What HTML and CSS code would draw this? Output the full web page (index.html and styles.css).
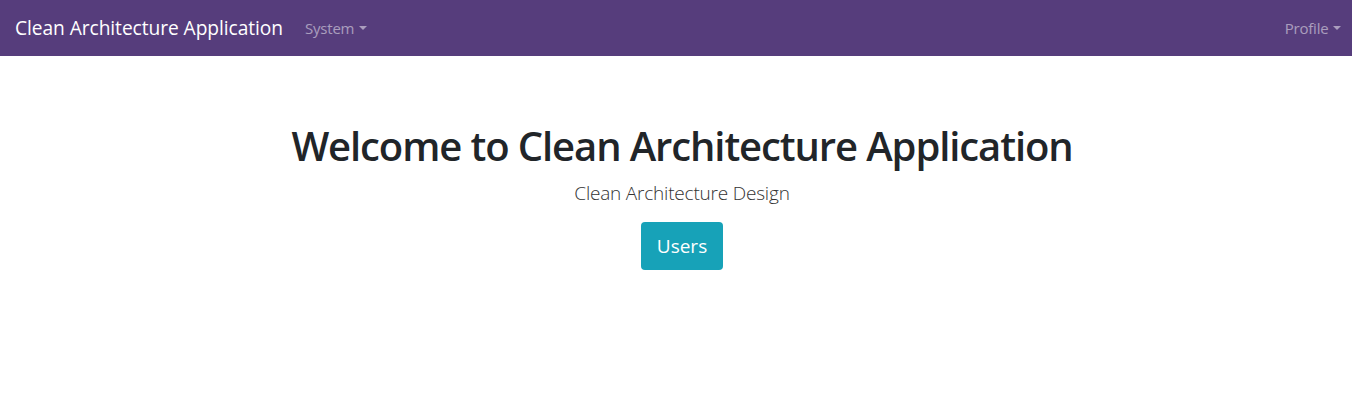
FILE: index.html
```html
<!DOCTYPE html>
<html lang="en">
<head>
<meta charset="utf-8">
<title>Clean Architecture Application</title>
<link rel="stylesheet" href="styles.css">
</head>
<body>
<nav class="navbar">
  <div class="nav-left">
    <a class="brand" href="#">Clean Architecture Application</a>
    <a class="nav-link dropdown-toggle" href="#">System</a>
  </div>
  <a class="nav-link dropdown-toggle" href="#">Profile</a>
</nav>
<main class="hero">
  <h1 class="title">Welcome to Clean Architecture Application</h1>
  <p class="lead">Clean Architecture Design</p>
  <a class="btn" href="#">Users</a>
</main>
</body>
</html>
```
FILE: styles.css
```css
* { box-sizing: border-box; }
body {
  margin: 0;
  font-family: "Open Sans", "Noto Sans", "Liberation Sans", sans-serif;
  color: #212529;
  background: #fff;
}
a { text-decoration: none; }
.navbar {
  height: 56px;
  background: #563d7c;
  display: flex;
  align-items: center;
  justify-content: space-between;
  padding: 0 3px 0 15px;
}
.nav-left { display: flex; align-items: center; }
.brand {
  color: #fff;
  font-size: 19.2px;
  line-height: 30px;
  margin-right: 14px;
  letter-spacing: -0.07px;
}
.nav-link {
  color: rgba(255,255,255,.5);
  font-size: 15px;
  padding: 8px;
  letter-spacing: -0.2px;
}
.dropdown-toggle::after {
  content: "";
  display: inline-block;
  margin-left: .3em;
  vertical-align: .25em;
  border-top: .3em solid;
  border-right: .3em solid transparent;
  border-left: .3em solid transparent;
}
.hero {
  display: flex;
  flex-direction: column;
  align-items: center;
  padding-top: 66px;
  padding-left: 12px;
}
.title {
  margin: 0 0 8px;
  font-size: 40px;
  font-weight: 600;
  line-height: 48px;
  letter-spacing: -1.1px;
}
.lead {
  margin: 0 0 14px;
  font-size: 19px;
  font-weight: 300;
  line-height: 30px;
  color: #333;
  letter-spacing: -0.2px;
}
.btn {
  display: inline-block;
  background: #17a2b8;
  color: #fff;
  font-size: 19px;
  font-weight: 500;
  line-height: 30px;
  padding: 9px 16px;
  border-radius: 4px;
}
```
